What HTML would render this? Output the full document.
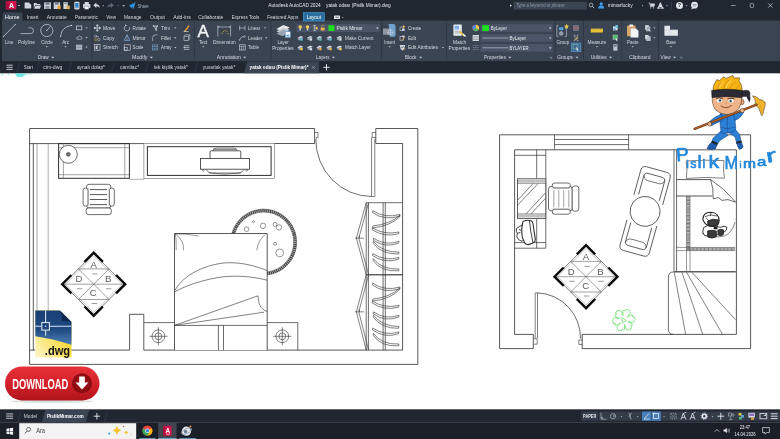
<!DOCTYPE html>
<html><head><meta charset="utf-8"><title>Autodesk AutoCAD 2024 - yatak odası (Pislik Mimar).dwg</title>
<style>
html,body{margin:0;padding:0;background:#fff;overflow:hidden}
body{width:780px;height:439px;font-family:"Liberation Sans",sans-serif}
svg{display:block;will-change:transform}
svg text{font-family:"Liberation Sans",sans-serif}
</style></head><body>
<svg width="780" height="439" viewBox="0 0 780 439">
<rect x="0" y="0" width="780" height="439" fill="#ffffff"/>
<rect x="0" y="0" width="780" height="73.3" fill="#212731"/>
<rect x="2" y="20.6" width="778" height="40.5" fill="#3b4453"/>
<path d="M2.7,21 L2.7,13.6 Q2.7,12.6 3.7,12.6 L21.6,12.6 Q22.6,12.6 22.6,13.6 L22.6,21 Z" fill="#3b4453"/>
<rect x="303.3" y="12.7" width="21" height="8.3" fill="#2c6f9f" stroke="#4aa3df" stroke-width="0.6"/>
<rect x="5.8" y="1" width="10.6" height="8.4" rx="0.8" fill="#d0144b"/>
<rect x="5.8" y="1" width="3" height="8.4" rx="0.8" fill="#a80f3c"/>
<text x="11.6" y="8" font-size="7" fill="#ffffff" text-anchor="middle" font-weight="bold" >A</text>
<path d="M17.9,5.05 L20.1,5.05 L19,6.369999999999999 Z" fill="#e8ebf0"/>
<path d="M24.6,2.6 h4.2 l2.4,2.2 v3.8 h-6.6 z" fill="#d0d5dd"/>
<path d="M33.8,3 h2.6 l0.8,1 h3 v1 h-5 l-1.4,3.6 z M35.6,5.6 h5.6 l-1.4,3.2 h-5.6 z" fill="#d0d5dd"/>
<path d="M44.1,2.4 h6.8 v6.6 h-6.8 z" fill="#d0d5dd"/><rect x="45.6" y="2.4" width="3.8" height="2.4" fill="#6d7685"/><rect x="45.4" y="6" width="4.2" height="3" fill="#8d95a3"/>
<path d="M53.7,2.4 h6.4 v6.6 h-6.4 z" fill="#d0d5dd"/><rect x="55" y="2.4" width="3.6" height="2.2" fill="#6d7685"/><rect x="57.6" y="5.6" width="3" height="3.6" fill="#e2a93b"/>
<path d="M63.4,2.2 h4.4 v6.8 h-4.4 z" fill="#d0d5dd"/><rect x="66.4" y="5.6" width="3.4" height="3.6" fill="#d8b25a"/><rect x="64.2" y="3.2" width="2.6" height="0.7" fill="#6d7685"/>
<rect x="74.3" y="1.8" width="5.2" height="7.6" rx="0.8" fill="#d0d5dd"/><rect x="75.3" y="3" width="3.2" height="4.6" fill="#2f7fc6"/>
<rect x="83" y="4" width="7.4" height="4" rx="0.8" fill="#d0d5dd"/><rect x="84.6" y="2" width="4.2" height="2.4" fill="#d0d5dd"/><rect x="84.6" y="6.6" width="4.2" height="2.6" fill="#f4f6f9" stroke="#6d7685" stroke-width="0.3"/>
<path d="M93.3,5.2 l3,-2.6 v1.7 q3.2,0 3.4,3.6 q-1,-1.8 -3.4,-1.7 v1.7 z" fill="#d0d5dd"/>
<path d="M102.3,5.35 L104.10000000000001,5.35 L103.2,6.43 Z" fill="#b9c0cb"/>
<path d="M113.8,5.2 l-3,-2.6 v1.7 q-3.2,0 -3.4,3.6 q1,-1.8 3.4,-1.7 v1.7 z" fill="#5d6675"/>
<path d="M117.1,5.35 L118.9,5.35 L118,6.43 Z" fill="#7b8493"/>
<path d="M122.4,5.1499999999999995 L125.0,5.1499999999999995 L123.7,6.71 Z" fill="#c9cfd9"/>
<path d="M129.2,5.6 l6.2,-3.2 l-2,6.4 l-1.4,-2.4 z M129.2,5.6 l2.6,0.8 l0.2,2.2" fill="#2f8fe0" stroke="#2f8fe0" stroke-width="0.3"/>
<text x="137.4" y="7.6" font-size="5.4" fill="#9fb3c9" textLength="11.3" lengthAdjust="spacingAndGlyphs" >Share</text>
<text x="268.3" y="7.4" font-size="5.2" fill="#e4e7ec" textLength="52.4" lengthAdjust="spacingAndGlyphs" >Autodesk AutoCAD 2024</text>
<text x="326" y="7.4" font-size="5.2" fill="#e4e7ec" textLength="64.7" lengthAdjust="spacingAndGlyphs" >yatak odası (Pislik Mimar).dwg</text>
<path d="M509.8,5.1 L511.8,5.1 L510.8,6.3 Z" fill="#c9cfd9"/>
<path d="M510,4.2 l1.8,1.4 l-1.8,1.4 z" fill="#c9cfd9"/>
<rect x="513.6" y="1.8" width="73.3" height="7.9" fill="#3b4453"/>
<text x="516.2" y="7.3" font-size="4.6" fill="#8e98a7" textLength="48.4" lengthAdjust="spacingAndGlyphs" font-style="italic" >Type a keyword or phrase</text>
<circle cx="591" cy="5" r="1.9" fill="none" stroke="#c9cfd9" stroke-width="0.7"/><path d="M592.4,6.4 l1.8,1.8" stroke="#c9cfd9" stroke-width="0.8"/>
<circle cx="601.2" cy="3.9" r="1.6" fill="#3f9be6"/><path d="M598.2,8.6 q0,-3 3,-3 q3,0 3,3 z" fill="#3f9be6"/>
<text x="607.7" y="7.4" font-size="5" fill="#e4e7ec" textLength="25.1" lengthAdjust="spacingAndGlyphs" >mimarlucky</text>
<path d="M641.6,5.35 L643.4,5.35 L642.5,6.43 Z" fill="#b9c0cb"/>
<path d="M648.6,3 h1.2 l0.6,3.4 h3.6 l0.6,-2.6 h-4.4" fill="none" stroke="#d5dae2" stroke-width="0.7"/><circle cx="650.8" cy="7.8" r="0.6" fill="#d5dae2"/><circle cx="653.6" cy="7.8" r="0.6" fill="#d5dae2"/><rect x="650.4" y="4" width="3.8" height="2.2" fill="#d5dae2"/>
<path d="M657.4,8.4 l2.6,-6 h0.8 l2.6,6 h-1.3 l-0.6,-1.5 h-2.2 l-0.6,1.5 z" fill="#d5dae2"/><rect x="657" y="7.6" width="7" height="0.9" fill="#d5dae2"/>
<path d="M666.1,5.35 L667.9,5.35 L667,6.43 Z" fill="#b9c0cb"/>
<rect x="671.4" y="2" width="0.5" height="7" fill="#4a5363"/>
<circle cx="679.5" cy="5.4" r="3.5" fill="#e4e7ec"/>
<text x="679.5" y="7.4" font-size="5.4" fill="#212731" text-anchor="middle" font-weight="bold" >?</text>
<path d="M685.7,5.35 L687.5,5.35 L686.6,6.43 Z" fill="#b9c0cb"/>
<circle cx="694.5" cy="5.2" r="3.4" fill="#e4e7ec"/><path d="M692,7.4 l-0.8,2 l2.4,-1.2 z" fill="#e4e7ec"/><rect x="692.6" y="4" width="3.8" height="0.6" fill="#6a7382"/><rect x="692.6" y="5.6" width="3.8" height="0.6" fill="#6a7382"/>
<rect x="731" y="5.3" width="4.6" height="0.7" fill="#b4bbc6"/>
<rect x="750.2" y="3.6" width="3.4" height="3.8" rx="0.8" fill="none" stroke="#b4bbc6" stroke-width="0.7"/>
<path d="M768.2,3.4 l4.2,4.2 M772.4,3.4 l-4.2,4.2" stroke="#c3c9d3" stroke-width="0.75"/>
<text x="5.1" y="18.8" font-size="5.2" fill="#ffffff" textLength="14.4" lengthAdjust="spacingAndGlyphs" >Home</text>
<text x="27" y="18.8" font-size="5.2" fill="#d5dae2" textLength="11.6" lengthAdjust="spacingAndGlyphs" >Insert</text>
<text x="46.8" y="18.8" font-size="5.2" fill="#d5dae2" textLength="19.9" lengthAdjust="spacingAndGlyphs" >Annotate</text>
<text x="74.9" y="18.8" font-size="5.2" fill="#d5dae2" textLength="23.1" lengthAdjust="spacingAndGlyphs" >Parametric</text>
<text x="106.3" y="18.8" font-size="5.2" fill="#d5dae2" textLength="9.6" lengthAdjust="spacingAndGlyphs" >View</text>
<text x="124.1" y="18.8" font-size="5.2" fill="#d5dae2" textLength="17.4" lengthAdjust="spacingAndGlyphs" >Manage</text>
<text x="150" y="18.8" font-size="5.2" fill="#d5dae2" textLength="15" lengthAdjust="spacingAndGlyphs" >Output</text>
<text x="173.3" y="18.8" font-size="5.2" fill="#d5dae2" textLength="17.4" lengthAdjust="spacingAndGlyphs" >Add-ins</text>
<text x="198.3" y="18.8" font-size="5.2" fill="#d5dae2" textLength="25.0" lengthAdjust="spacingAndGlyphs" >Collaborate</text>
<text x="231.7" y="18.8" font-size="5.2" fill="#d5dae2" textLength="27.6" lengthAdjust="spacingAndGlyphs" >Express Tools</text>
<text x="267.3" y="18.8" font-size="5.2" fill="#d5dae2" textLength="31.0" lengthAdjust="spacingAndGlyphs" >Featured Apps</text>
<text x="306.7" y="18.8" font-size="5.2" fill="#ffffff" textLength="14.3" lengthAdjust="spacingAndGlyphs" >Layout</text>
<rect x="334" y="15.4" width="6" height="3.6" rx="0.6" fill="#e4e7ec"/><rect x="335.4" y="16.8" width="3.2" height="0.8" fill="#3b4453"/>
<path d="M341.8,16.95 L343.59999999999997,16.95 L342.7,18.029999999999998 Z" fill="#c9cfd9"/>
<rect x="91.7" y="21.5" width="0.6" height="38.5" fill="#2a313d"/>
<rect x="194" y="21.5" width="0.6" height="38.5" fill="#2a313d"/>
<rect x="270.7" y="21.5" width="0.6" height="38.5" fill="#2a313d"/>
<rect x="381" y="21.5" width="0.6" height="38.5" fill="#2a313d"/>
<rect x="446.4" y="21.5" width="0.6" height="38.5" fill="#2a313d"/>
<rect x="554.8" y="21.5" width="0.6" height="38.5" fill="#2a313d"/>
<rect x="583" y="21.5" width="0.6" height="38.5" fill="#2a313d"/>
<rect x="621.5" y="21.5" width="0.6" height="38.5" fill="#2a313d"/>
<rect x="658" y="21.5" width="0.6" height="38.5" fill="#2a313d"/>
<path d="M3.4,36.6 L15.2,24.6" stroke="#cfd4dc" stroke-width="0.7"/><circle cx="3.4" cy="36.6" r="0.6" fill="#cfd4dc"/><circle cx="15.2" cy="24.6" r="0.6" fill="#cfd4dc"/>
<path d="M20.5,33.6 H30.6 A2.9,2.9 0 0 0 30.6,27.8 H28.6" fill="none" stroke="#cfd4dc" stroke-width="0.7"/>
<circle cx="46.8" cy="30.5" r="6.1" fill="none" stroke="#cfd4dc" stroke-width="0.7"/><path d="M46.8,30.5 L50.6,26.4" stroke="#cfd4dc" stroke-width="0.7"/><circle cx="46.8" cy="30.5" r="0.6" fill="#cfd4dc"/>
<path d="M60.6,36.2 Q61.4,27 71.6,25.4" fill="none" stroke="#cfd4dc" stroke-width="0.7"/><circle cx="60.6" cy="36.4" r="0.6" fill="#cfd4dc"/><circle cx="71.6" cy="25.4" r="0.6" fill="#cfd4dc"/>
<rect x="76.6" y="26" width="5.2" height="3.8" fill="none" stroke="#cfd4dc" stroke-width="0.7"/>
<path d="M77,39.2 q-1,-2.2 1.2,-2.4 q1,-1.6 2.6,-0.2 q1.8,0.2 1,2.6 z" fill="none" stroke="#cfd4dc" stroke-width="0.6"/>
<rect x="76.6" y="45" width="5.2" height="4.6" fill="#8d95a3" stroke="#cfd4dc" stroke-width="0.5"/><path d="M75.8,46.2 h6.8 M75.8,48.4 h6.8" stroke="#cfd4dc" stroke-width="0.5"/>
<path d="M85.35,27.425 L87.65,27.425 L86.5,28.805 Z" fill="#c5cbd5"/>
<path d="M85.35,37.025 L87.65,37.025 L86.5,38.405 Z" fill="#c5cbd5"/>
<path d="M85.35,46.724999999999994 L87.65,46.724999999999994 L86.5,48.105 Z" fill="#c5cbd5"/>
<text x="5.1" y="43.8" font-size="5" fill="#d5dae2" textLength="8.4" lengthAdjust="spacingAndGlyphs" >Line</text>
<text x="18" y="43.8" font-size="5" fill="#d5dae2" textLength="16.9" lengthAdjust="spacingAndGlyphs" >Polyline</text>
<text x="41.3" y="43.8" font-size="5" fill="#d5dae2" textLength="11.5" lengthAdjust="spacingAndGlyphs" >Circle</text>
<text x="62.2" y="43.8" font-size="5" fill="#d5dae2" textLength="7" lengthAdjust="spacingAndGlyphs" >Arc</text>
<path d="M45.699999999999996,46.150000000000006 L47.9,46.150000000000006 L46.8,47.470000000000006 Z" fill="#c5cbd5"/>
<path d="M64.5,46.150000000000006 L66.69999999999999,46.150000000000006 L65.6,47.470000000000006 Z" fill="#c5cbd5"/>
<text x="37.8" y="59" font-size="5" fill="#d5dae2" textLength="10.9" lengthAdjust="spacingAndGlyphs" >Draw</text>
<path d="M51.3,56.65 L54.3,56.65 L52.8,58.449999999999996 Z" fill="#c5cbd5"/>
<path d="M97.3,25 v6 M94.3,28 h6 M97.3,24.6 l-1,1.2 h2 z M97.3,31.4 l-1,-1.2 h2 z M93.9,28 l1.2,-1 v2 z M100.7,28 l-1.2,-1 v2 z" stroke="#cfd4dc" stroke-width="0.7" fill="#cfd4dc"/>
<circle cx="95.6" cy="36.4" r="1.2" fill="none" stroke="#cfd4dc" stroke-width="0.5"/><circle cx="98.8" cy="39.6" r="1.2" fill="none" stroke="#cfd4dc" stroke-width="0.5"/><circle cx="95.8" cy="39.8" r="1" fill="none" stroke="#e0a53a" stroke-width="0.5"/><path d="M96,36 l3,1" stroke="#cfd4dc" stroke-width="0.5"/>
<rect x="94.6" y="44.6" width="5.4" height="5.6" fill="none" stroke="#cfd4dc" stroke-width="0.6"/><path d="M97.6,44.6 v5.6" stroke="#cfd4dc" stroke-width="0.5"/><rect x="95.6" y="45.8" width="1.4" height="3.2" fill="#cfd4dc"/>
<text x="103" y="29.8" font-size="5" fill="#d5dae2" textLength="12.4" lengthAdjust="spacingAndGlyphs" >Move</text>
<text x="103" y="39.6" font-size="5" fill="#d5dae2" textLength="11.5" lengthAdjust="spacingAndGlyphs" >Copy</text>
<text x="103" y="49.3" font-size="5" fill="#d5dae2" textLength="15" lengthAdjust="spacingAndGlyphs" >Stretch</text>
<path d="M129.6,27.2 A2.8,2.8 0 1 1 125.8,25.6" fill="none" stroke="#cfd4dc" stroke-width="0.7"/><path d="M125,24.4 l2,0.8 l-1.6,1.4 z" fill="#cfd4dc"/>
<path d="M124.2,40.4 l2.8,-5.6 l2.8,5.6 z" fill="none" stroke="#7fb2e6" stroke-width="0.7"/><path d="M127,34.6 v6" stroke="#cfd4dc" stroke-width="0.4"/>
<rect x="124.2" y="44.8" width="6" height="5.4" fill="none" stroke="#cfd4dc" stroke-width="0.6"/><rect x="124.2" y="47.4" width="3" height="2.8" fill="none" stroke="#cfd4dc" stroke-width="0.6"/>
<text x="132.6" y="29.8" font-size="5" fill="#d5dae2" textLength="13.5" lengthAdjust="spacingAndGlyphs" >Rotate</text>
<text x="132.6" y="39.6" font-size="5" fill="#d5dae2" textLength="13.2" lengthAdjust="spacingAndGlyphs" >Mirror</text>
<text x="132.6" y="49.3" font-size="5" fill="#d5dae2" textLength="10.7" lengthAdjust="spacingAndGlyphs" >Scale</text>
<path d="M153.2,25 l3.6,5.6 M157.4,25 l-1.6,5.8 M152.8,26.2 h5.2" stroke="#cfd4dc" stroke-width="0.8" fill="none"/>
<path d="M152.6,41 V37.6 Q152.6,34.8 155.8,34.8 H157.6" fill="none" stroke="#cfd4dc" stroke-width="0.6"/>
<rect x="152.6" y="44.8" width="2" height="2" fill="none" stroke="#7fb2e6" stroke-width="0.5"/><rect x="155.8" y="44.8" width="2" height="2" fill="none" stroke="#7fb2e6" stroke-width="0.5"/><rect x="152.6" y="48" width="2" height="2" fill="none" stroke="#7fb2e6" stroke-width="0.5"/><rect x="155.8" y="48" width="2" height="2" fill="none" stroke="#7fb2e6" stroke-width="0.5"/>
<text x="161" y="29.8" font-size="5" fill="#d5dae2" textLength="9" lengthAdjust="spacingAndGlyphs" >Trim</text>
<text x="161" y="39.6" font-size="5" fill="#d5dae2" textLength="9.8" lengthAdjust="spacingAndGlyphs" >Fillet</text>
<text x="161" y="49.3" font-size="5" fill="#d5dae2" textLength="10.5" lengthAdjust="spacingAndGlyphs" >Array</text>
<path d="M174.15,27.425 L176.45000000000002,27.425 L175.3,28.805 Z" fill="#c5cbd5"/>
<path d="M174.15,37.324999999999996 L176.45000000000002,37.324999999999996 L175.3,38.705 Z" fill="#c5cbd5"/>
<path d="M174.15,46.925 L176.45000000000002,46.925 L175.3,48.305 Z" fill="#c5cbd5"/>
<path d="M184.4,30.8 l4,-5.6 l1.2,0.8 l-4,5.6 z" fill="#e9a23b"/><path d="M184,31.4 l0.4,-0.8 l1.2,0.8 z" fill="#f2d9b0"/><rect x="183.6" y="31.2" width="5" height="0.6" fill="#e8e0d0"/>
<rect x="184" y="36.2" width="4.6" height="4.2" fill="none" stroke="#cfd4dc" stroke-width="0.6"/><path d="M184,36.2 l1.2,-1.4 h4.6 l-1.2,1.4 M189.8,34.8 v4.2 l-1.2,1.4" fill="none" stroke="#cfd4dc" stroke-width="0.5"/>
<path d="M183.8,45.8 h5.6 M183.8,47.6 h5.6 M183.8,49.4 h5.6" stroke="#cfd4dc" stroke-width="0.7"/><path d="M183.4,47.6 l1.4,-1 v2 z" fill="#cfd4dc"/>
<text x="132" y="59" font-size="5" fill="#d5dae2" textLength="15.5" lengthAdjust="spacingAndGlyphs" >Modify</text>
<path d="M149.9,56.65 L152.9,56.65 L151.4,58.449999999999996 Z" fill="#c5cbd5"/>
<text x="203.2" y="36.9" font-size="17" fill="#eef0f4" text-anchor="middle" stroke="#eef0f4" stroke-width="0.45">A</text>
<text x="199.2" y="43.8" font-size="5" fill="#d5dae2" textLength="8" lengthAdjust="spacingAndGlyphs" >Text</text>
<path d="M202.20000000000002,46.150000000000006 L204.4,46.150000000000006 L203.3,47.470000000000006 Z" fill="#c5cbd5"/>
<path d="M217.8,25.4 v11 M230.6,25.4 v11 M217.8,27 h12.8" stroke="#cfd4dc" stroke-width="0.6" fill="none"/><path d="M217.8,27 l1.4,-0.7 v1.4 z M230.6,27 l-1.4,-0.7 v1.4 z" fill="#cfd4dc"/>
<path d="M221.4,33.6 l1.4,-0.8 M223.2,32 l0.8,-1.2 M225.2,31.2 v-1.2 M226.6,32 l0.8,-0.8 M227.4,33.4 l1.2,0.4" stroke="#e8c33a" stroke-width="0.7"/>
<text x="213" y="43.8" font-size="5" fill="#d5dae2" textLength="22.8" lengthAdjust="spacingAndGlyphs" >Dimension</text>
<path d="M239.6,25.8 v4.6 M245,25.8 v4.6 M239.6,28 h5.4" stroke="#cfd4dc" stroke-width="0.6"/>
<path d="M239.4,40.2 l2.4,-3.4 h2" stroke="#cfd4dc" stroke-width="0.6" fill="none"/><circle cx="244.6" cy="36.6" r="0.9" fill="none" stroke="#cfd4dc" stroke-width="0.5"/><path d="M239,40.8 l0.4,-1.6 l1,0.8 z" fill="#cfd4dc"/>
<rect x="239.4" y="44.8" width="5.8" height="5.2" fill="none" stroke="#cfd4dc" stroke-width="0.6"/><path d="M239.4,46.4 h5.8 M241.4,46.4 v3.6 M243.3,46.4 v3.6" stroke="#cfd4dc" stroke-width="0.5"/>
<text x="248.1" y="29.8" font-size="5" fill="#d5dae2" textLength="12" lengthAdjust="spacingAndGlyphs" >Linear</text>
<text x="248.1" y="39.6" font-size="5" fill="#d5dae2" textLength="14.1" lengthAdjust="spacingAndGlyphs" >Leader</text>
<text x="248.1" y="49.3" font-size="5" fill="#d5dae2" textLength="10.9" lengthAdjust="spacingAndGlyphs" >Table</text>
<path d="M263.85,27.425 L266.15,27.425 L265,28.805 Z" fill="#c5cbd5"/>
<path d="M265.05,37.324999999999996 L267.34999999999997,37.324999999999996 L266.2,38.705 Z" fill="#c5cbd5"/>
<text x="216.8" y="59" font-size="5" fill="#d5dae2" textLength="24" lengthAdjust="spacingAndGlyphs" >Annotation</text>
<path d="M243.2,56.65 L246.2,56.65 L244.7,58.449999999999996 Z" fill="#c5cbd5"/>
<path d="M276.4,29 l7,-4 l6.4,2.4 l-7,4 z" fill="#e8ebf0"/><path d="M276.4,31.4 l7,-4 l6.4,2.4 l-7,4 z" fill="#c4cad4"/><path d="M276.4,33.8 l7,-4 l6.4,2.4 l-7,4 z" fill="#9aa3b1"/><rect x="285.4" y="31.6" width="5" height="5.8" fill="#f4f6f9" stroke="#58a0dc" stroke-width="0.5"/><rect x="286.4" y="34.8" width="3" height="1.6" fill="#58a0dc"/>
<text x="277.4" y="43.8" font-size="5" fill="#d5dae2" textLength="11.3" lengthAdjust="spacingAndGlyphs" >Layer</text>
<text x="272.2" y="49.7" font-size="5" fill="#d5dae2" textLength="21.5" lengthAdjust="spacingAndGlyphs" >Properties</text>
<rect x="296.3" y="24.2" width="83.3" height="7.8" fill="#4b5567"/>
<circle cx="300.2" cy="27" r="1.7" fill="#f2cf4a"/><rect x="299.5" y="28.6" width="1.4" height="1.8" fill="#d8dce3"/>
<circle cx="307.5" cy="27" r="1.7" fill="#f2cf4a"/><rect x="306.8" y="28.6" width="1.4" height="1.8" fill="#d8dce3"/>
<path d="M313.2,25.6 h3 M313.2,28 h3 M313.2,30.4 h3 M314.7,25.4 v5.2" stroke="#d8dce3" stroke-width="0.6"/><rect x="316" y="27" width="1.6" height="2.4" fill="#f2cf4a"/>
<rect x="320.8" y="27.6" width="3.8" height="3" fill="#e9b44a"/><path d="M321.6,27.6 v-1 a1.2,1.2 0 0 1 2.4,-0.6" fill="none" stroke="#e9b44a" stroke-width="0.6"/>
<rect x="328.4" y="25.2" width="6" height="5.8" fill="#1fe01f"/>
<text x="336.5" y="30" font-size="5" fill="#e8ebf0" textLength="26.1" lengthAdjust="spacingAndGlyphs" >Pislik Mimar</text>
<path d="M376.0,27.5 L378.79999999999995,27.5 L377.4,29.18 Z" fill="#c5cbd5"/>
<path d="M297.4,37.9 l3.2,-2 l2.6,1.2 l-3.2,2 z" fill="#d8dce3"/><path d="M297.4,39.3 l3.2,-2 l2.6,1.2 l-3.2,2 z" fill="#9aa3b1"/>
<rect x="300.4" y="38.5" width="2.2" height="2.2" fill="#58c0d8"/>
<path d="M306.9,37.9 l3.2,-2 l2.6,1.2 l-3.2,2 z" fill="#d8dce3"/><path d="M306.9,39.3 l3.2,-2 l2.6,1.2 l-3.2,2 z" fill="#9aa3b1"/>
<rect x="309.9" y="38.5" width="2.2" height="2.2" fill="#d8dce3"/>
<path d="M316.4,37.9 l3.2,-2 l2.6,1.2 l-3.2,2 z" fill="#d8dce3"/><path d="M316.4,39.3 l3.2,-2 l2.6,1.2 l-3.2,2 z" fill="#9aa3b1"/>
<rect x="319.4" y="38.5" width="2.2" height="2.2" fill="#58c0a8"/>
<path d="M326.4,37.9 l3.2,-2 l2.6,1.2 l-3.2,2 z" fill="#d8dce3"/><path d="M326.4,39.3 l3.2,-2 l2.6,1.2 l-3.2,2 z" fill="#9aa3b1"/>
<rect x="329.4" y="38.5" width="2.2" height="2.2" fill="#58c0d8"/>
<path d="M336.4,37.9 l3.2,-2 l2.6,1.2 l-3.2,2 z" fill="#d8dce3"/><path d="M336.4,39.3 l3.2,-2 l2.6,1.2 l-3.2,2 z" fill="#9aa3b1"/>
<rect x="339.4" y="38.5" width="2.2" height="2.2" fill="#d8dce3"/>
<path d="M297.4,47.5 l3.2,-2 l2.6,1.2 l-3.2,2 z" fill="#d8dce3"/><path d="M297.4,48.9 l3.2,-2 l2.6,1.2 l-3.2,2 z" fill="#9aa3b1"/>
<rect x="300.4" y="48.1" width="2.2" height="2.2" fill="#f2cf4a"/>
<path d="M306.9,47.5 l3.2,-2 l2.6,1.2 l-3.2,2 z" fill="#d8dce3"/><path d="M306.9,48.9 l3.2,-2 l2.6,1.2 l-3.2,2 z" fill="#9aa3b1"/>
<rect x="309.9" y="48.1" width="2.2" height="2.2" fill="#d8dce3"/>
<path d="M316.4,47.5 l3.2,-2 l2.6,1.2 l-3.2,2 z" fill="#d8dce3"/><path d="M316.4,48.9 l3.2,-2 l2.6,1.2 l-3.2,2 z" fill="#9aa3b1"/>
<rect x="319.4" y="48.1" width="2.2" height="2.2" fill="#e9a23b"/>
<path d="M326.4,47.5 l3.2,-2 l2.6,1.2 l-3.2,2 z" fill="#d8dce3"/><path d="M326.4,48.9 l3.2,-2 l2.6,1.2 l-3.2,2 z" fill="#9aa3b1"/>
<rect x="329.4" y="48.1" width="2.2" height="2.2" fill="#e9b44a"/>
<path d="M336.4,47.5 l3.2,-2 l2.6,1.2 l-3.2,2 z" fill="#d8dce3"/><path d="M336.4,48.9 l3.2,-2 l2.6,1.2 l-3.2,2 z" fill="#9aa3b1"/>
<rect x="339.4" y="48.1" width="2.2" height="2.2" fill="#f2cf4a"/>
<text x="345" y="39.6" font-size="5" fill="#d5dae2" textLength="28.5" lengthAdjust="spacingAndGlyphs" >Make Current</text>
<text x="345" y="49.3" font-size="5" fill="#d5dae2" textLength="25.7" lengthAdjust="spacingAndGlyphs" >Match Layer</text>
<text x="316.1" y="59" font-size="5" fill="#d5dae2" textLength="13.4" lengthAdjust="spacingAndGlyphs" >Layers</text>
<path d="M331.9,56.65 L334.9,56.65 L333.4,58.449999999999996 Z" fill="#c5cbd5"/>
<rect x="383" y="28.4" width="8.4" height="6.4" rx="0.6" fill="#8d95a3"/><path d="M388.6,24 h4.4 q2.6,0 2.6,2.6 v7.6 q0,2.6 -2.6,2.6 h-3 z" fill="#7fb8e8" opacity="0.8"/><circle cx="390.4" cy="32.4" r="2.6" fill="none" stroke="#d8dce3" stroke-width="0.5"/><path d="M390.4,29.2 v6.4 M387.2,32.4 h6.4" stroke="#d8dce3" stroke-width="0.4"/>
<text x="384.2" y="43.8" font-size="5" fill="#d5dae2" textLength="10.9" lengthAdjust="spacingAndGlyphs" >Insert</text>
<path d="M388.59999999999997,46.150000000000006 L390.8,46.150000000000006 L389.7,47.470000000000006 Z" fill="#c5cbd5"/>
<rect x="400" y="27" width="3.6" height="3.6" fill="none" stroke="#cfd4dc" stroke-width="0.6"/><path d="M403.8,25 l0.5,1 l1,0.1 l-0.8,0.7 l0.3,1 l-1,-0.6 l-1,0.6 l0.3,-1 l-0.8,-0.7 l1,-0.1 z" fill="#f2cf4a"/><rect x="402" y="28.6" width="2.6" height="2.4" fill="#cfd4dc"/>
<rect x="400" y="36.6" width="3.6" height="3.6" fill="none" stroke="#cfd4dc" stroke-width="0.6"/><path d="M402,40.4 l3,-3.4" stroke="#e9a23b" stroke-width="0.9"/><rect x="402" y="35.6" width="2.6" height="1.6" fill="#cfd4dc"/>
<path d="M399.6,45 h5.6 l-1,4 l-1.8,1.6 l-1.8,-1.6 z" fill="#cfd4dc"/><path d="M401.2,47 l1,1 l1.6,-2" stroke="#3b4453" stroke-width="0.6" fill="none"/><path d="M403,50.6 l2.4,-2.6" stroke="#e9a23b" stroke-width="0.8"/>
<text x="408" y="29.8" font-size="5" fill="#d5dae2" textLength="13.3" lengthAdjust="spacingAndGlyphs" >Create</text>
<text x="408" y="39.6" font-size="5" fill="#d5dae2" textLength="8" lengthAdjust="spacingAndGlyphs" >Edit</text>
<text x="408" y="49.3" font-size="5" fill="#d5dae2" textLength="30" lengthAdjust="spacingAndGlyphs" >Edit Attributes</text>
<path d="M441.75,46.925 L444.04999999999995,46.925 L442.9,48.305 Z" fill="#c5cbd5"/>
<text x="404.8" y="59" font-size="5" fill="#d5dae2" textLength="11.7" lengthAdjust="spacingAndGlyphs" >Block</text>
<path d="M419.2,56.65 L422.2,56.65 L420.7,58.449999999999996 Z" fill="#c5cbd5"/>
<rect x="453.4" y="24.4" width="8.4" height="11.4" rx="0.6" fill="#e8ebf0"/><rect x="454.6" y="25.8" width="4.4" height="3.6" fill="#7fb2e6"/><rect x="454.6" y="30.8" width="6" height="0.7" fill="#8d95a3"/><rect x="454.6" y="32.6" width="6" height="0.7" fill="#8d95a3"/><path d="M459.6,31.4 l4.6,4.4" stroke="#e8c33a" stroke-width="1.6"/><path d="M463,34 l2.6,2.6" stroke="#f4f6f9" stroke-width="1.4"/>
<text x="453" y="43.8" font-size="5" fill="#d5dae2" textLength="13.2" lengthAdjust="spacingAndGlyphs" >Match</text>
<text x="448.5" y="49.7" font-size="5" fill="#d5dae2" textLength="21.6" lengthAdjust="spacingAndGlyphs" >Properties</text>
<circle cx="475.8" cy="28" r="3.3" fill="#e8574a"/><path d="M475.8,28 L475.8,24.7 A3.3,3.3 0 0 1 478.66,29.65 Z" fill="#f2cf4a"/><path d="M475.8,28 L478.66,29.65 A3.3,3.3 0 0 1 472.94,29.65 Z" fill="#4ab86a"/><path d="M475.8,28 L472.94,29.65 A3.3,3.3 0 0 1 475.8,24.7 Z" fill="#4a8ae8"/>
<rect x="472.6" y="35" width="6.4" height="6" fill="#d8dce3"/><path d="M472.6,36.6 h6.4 M472.6,38 h6.4 M472.6,39.6 h6.4" stroke="#6d7685" stroke-width="0.5"/>
<path d="M472.8,45.6 h6 M472.8,47.6 h6 M472.8,49.6 h6" stroke="#9aa3b1" stroke-width="0.7" stroke-dasharray="1.2,0.6"/>
<rect x="480.5" y="24.2" width="71.9" height="7.7" fill="#4b5567"/>
<path d="M548.9,27.5 L551.6999999999999,27.5 L550.3,29.18 Z" fill="#c5cbd5"/>
<rect x="480.5" y="34.1" width="71.9" height="7.7" fill="#4b5567"/>
<path d="M548.9,37.4 L551.6999999999999,37.4 L550.3,39.08 Z" fill="#c5cbd5"/>
<rect x="480.5" y="44" width="71.9" height="7.7" fill="#4b5567"/>
<path d="M548.9,47.3 L551.6999999999999,47.3 L550.3,48.98 Z" fill="#c5cbd5"/>
<rect x="482.2" y="25.2" width="6.8" height="5.8" fill="#1fe01f"/>
<text x="490.7" y="30" font-size="5" fill="#e8ebf0" textLength="16.3" lengthAdjust="spacingAndGlyphs" >ByLayer</text>
<path d="M482.6,38 H508.4 M482.6,47.8 H508.4" stroke="#e8ebf0" stroke-width="0.5"/>
<text x="509.4" y="39.8" font-size="5" fill="#e8ebf0" textLength="16.6" lengthAdjust="spacingAndGlyphs" >ByLayer</text>
<text x="509.4" y="49.6" font-size="5" fill="#e8ebf0" textLength="19.1" lengthAdjust="spacingAndGlyphs" >BYLAYER</text>
<text x="484" y="59" font-size="5" fill="#d5dae2" textLength="21.9" lengthAdjust="spacingAndGlyphs" >Properties</text>
<path d="M508.3,56.65 L511.3,56.65 L509.8,58.449999999999996 Z" fill="#c5cbd5"/>
<path d="M549.6,57 h2 v2 M551.6,59 l-1.8,-1.8" stroke="#9aa3b1" stroke-width="0.4" fill="none"/>
<path d="M558.4,25.6 h-1.6 v10.8 h1.6 M564.8,28 h1.6 v8.4 h-1.6" fill="none" stroke="#cfd4dc" stroke-width="0.6"/><rect x="559" y="27.2" width="4.4" height="3" rx="0.6" fill="#58a0dc"/><circle cx="561.2" cy="33.4" r="1.9" fill="#8d95a3" stroke="#cfd4dc" stroke-width="0.4"/><path d="M566.6,23.8 l0.7,1.7 l1.8,0.2 l-1.4,1.2 l0.5,1.8 l-1.6,-1 l-1.6,1 l0.5,-1.8 l-1.4,-1.2 l1.8,-0.2 z" fill="#f2cf4a"/>
<text x="556.4" y="43.8" font-size="5" fill="#d5dae2" textLength="12.9" lengthAdjust="spacingAndGlyphs" >Group</text>
<path d="M574,25 v6 M576,25 v6 M578,25 v6" stroke="#d8dce3" stroke-width="0.6"/><path d="M573.4,26.6 l2,2.6 M578.6,26.6 l-2,2.6" stroke="#e8574a" stroke-width="0.8"/>
<path d="M573.6,35 h1.4 v5.6 h-1.4 M578.4,35 h-1.4 v5.6 h1.4" stroke="#d8dce3" stroke-width="0.5" fill="none"/><path d="M575.4,40 l2.6,-3" stroke="#e8c33a" stroke-width="1"/>
<rect x="571.2" y="43" width="9.6" height="8.7" fill="#3d6a94" stroke="#5aa0d8" stroke-width="0.6"/><rect x="573" y="44.6" width="5" height="4.4" fill="none" stroke="#9ad08a" stroke-width="0.5"/><path d="M576,46.6 l2.6,3.6 l-1.2,0 l-0.4,1 z" fill="#f4f6f9"/>
<text x="557.3" y="59" font-size="5" fill="#d5dae2" textLength="15.7" lengthAdjust="spacingAndGlyphs" >Groups</text>
<path d="M575.5,56.65 L578.5,56.65 L577,58.449999999999996 Z" fill="#c5cbd5"/>
<rect x="590.8" y="28.6" width="12.1" height="3.9" fill="#e8c33a"/><path d="M592.4,28.6 v1.6 M594.4,28.6 v1.2 M596.4,28.6 v1.6 M598.4,28.6 v1.2 M600.4,28.6 v1.6" stroke="#8a6d1a" stroke-width="0.4"/>
<text x="587.5" y="43.8" font-size="5" fill="#d5dae2" textLength="18.7" lengthAdjust="spacingAndGlyphs" >Measure</text>
<path d="M595.9,46.150000000000006 L598.1,46.150000000000006 L597,47.470000000000006 Z" fill="#c5cbd5"/>
<rect x="613" y="26.4" width="4.6" height="4" fill="#d8dce3"/><rect x="615.4" y="25" width="2.6" height="2.6" fill="#58c0d8"/><rect x="613.6" y="28.4" width="2" height="1.6" fill="#58a0dc"/>
<rect x="613" y="35" width="4.4" height="4.4" fill="#4ab86a" stroke="#d8dce3" stroke-width="0.4"/><path d="M615.4,37 l2.4,3.4 l-1.1,0 l-0.4,0.9 z" fill="#f4f6f9"/>
<rect x="613.4" y="44.4" width="4" height="6.2" fill="#d8dce3"/><rect x="614" y="45.2" width="2.8" height="1.4" fill="#58606e"/><path d="M614,47.6 h2.8 M614,48.8 h2.8 M614,50 h2.8" stroke="#58606e" stroke-width="0.4" stroke-dasharray="0.6,0.5"/>
<text x="590.8" y="59" font-size="5" fill="#d5dae2" textLength="15.9" lengthAdjust="spacingAndGlyphs" >Utilities</text>
<path d="M609.1,56.65 L612.1,56.65 L610.6,58.449999999999996 Z" fill="#c5cbd5"/>
<rect x="627" y="25.6" width="8.6" height="10.6" rx="0.8" fill="#d8a56a"/><rect x="629.4" y="24.4" width="3.8" height="2.2" rx="0.5" fill="#f4f6f9"/><path d="M630.6,28.4 h5.4 l2.4,2.4 v6.6 h-7.8 z" fill="#f4f6f9" stroke="#9aa3b1" stroke-width="0.3"/>
<text x="627" y="43.8" font-size="5" fill="#d5dae2" textLength="11.5" lengthAdjust="spacingAndGlyphs" >Paste</text>
<path d="M631.6,46.150000000000006 L633.8000000000001,46.150000000000006 L632.7,47.470000000000006 Z" fill="#c5cbd5"/>
<rect x="645.2" y="25.2" width="3.6" height="4.6" fill="#d8dce3"/><rect x="646.6" y="26.8" width="3.4" height="4.2" fill="#9aa3b1" stroke="#d8dce3" stroke-width="0.4"/><path d="M648.6,29 l1.8,2.6" stroke="#f4f6f9" stroke-width="0.6"/>
<rect x="645.2" y="35" width="3.4" height="4.4" fill="#d8dce3"/><rect x="646.8" y="36.4" width="3.4" height="4.4" fill="#b4bcc8" stroke="#d8dce3" stroke-width="0.4"/>
<path d="M653.3,27.45 L655.5,27.45 L654.4,28.77 Z" fill="#c5cbd5"/>
<path d="M653.3,37.25 L655.5,37.25 L654.4,38.57 Z" fill="#c5cbd5"/>
<text x="629.2" y="59" font-size="5" fill="#d5dae2" textLength="21.2" lengthAdjust="spacingAndGlyphs" >Clipboard</text>
<path d="M664.4,25.8 h5.6 v4 h7.9 v6 h-13.5 z" fill="#e4e7ec"/><path d="M664.4,29.8 h13.5 M670,29.8 v6" stroke="#aab2be" stroke-width="0.3" fill="none"/>
<text x="666.3" y="43.8" font-size="5" fill="#d5dae2" textLength="9.7" lengthAdjust="spacingAndGlyphs" >Base</text>
<path d="M669.9,46.150000000000006 L672.1,46.150000000000006 L671,47.470000000000006 Z" fill="#c5cbd5"/>
<text x="660.6" y="59" font-size="5" fill="#d5dae2" textLength="10.2" lengthAdjust="spacingAndGlyphs" >View</text>
<path d="M673.1,56.65 L676.1,56.65 L674.6,58.449999999999996 Z" fill="#c5cbd5"/>
<path d="M679.8,57 h2 v2 M681.8,59 l-1.8,-1.8" stroke="#9aa3b1" stroke-width="0.4" fill="none"/>
<path d="M243.8,73.3 L247.4,61.6 L318.9,61.6 L318.9,73.3 Z" fill="#3b4453"/>
<path d="M6.5,65.2 h6.2 M6.5,67.3 h6.2 M6.5,69.4 h6.2" stroke="#e4e7ec" stroke-width="0.8"/>
<text x="23.8" y="69" font-size="5" fill="#cfd4dc" textLength="9.2" lengthAdjust="spacingAndGlyphs" >Start</text>
<text x="43.2" y="69" font-size="5" fill="#cfd4dc" textLength="19.1" lengthAdjust="spacingAndGlyphs" >cim-dwg</text>
<text x="76.9" y="69" font-size="5" fill="#cfd4dc" textLength="28.1" lengthAdjust="spacingAndGlyphs" >aynalı dolap*</text>
<text x="120" y="69" font-size="5" fill="#cfd4dc" textLength="19.2" lengthAdjust="spacingAndGlyphs" >camilac*</text>
<text x="154" y="69" font-size="5" fill="#cfd4dc" textLength="34" lengthAdjust="spacingAndGlyphs" >tek kişilik yatak*</text>
<text x="202.8" y="69" font-size="5" fill="#cfd4dc" textLength="32.5" lengthAdjust="spacingAndGlyphs" >yuvarlak yatak*</text>
<path d="M17.1,72 l2.8,-9.4" stroke="#3a4250" stroke-width="0.6"/>
<path d="M36.6,72 l2.8,-9.4" stroke="#3a4250" stroke-width="0.6"/>
<path d="M68.6,72 l2.8,-9.4" stroke="#3a4250" stroke-width="0.6"/>
<path d="M111.6,72 l2.8,-9.4" stroke="#3a4250" stroke-width="0.6"/>
<path d="M145.6,72 l2.8,-9.4" stroke="#3a4250" stroke-width="0.6"/>
<path d="M194.6,72 l2.8,-9.4" stroke="#3a4250" stroke-width="0.6"/>
<text x="249.6" y="69" font-size="5" fill="#ffffff" textLength="58.9" lengthAdjust="spacingAndGlyphs" font-weight="bold" >yatak odası (Pislik Mimar)*</text>
<path d="M311.9,65.8 l3,3 M314.9,65.8 l-3,3" stroke="#aab2be" stroke-width="0.6"/>
<path d="M323.3,67.3 h6.4 M326.5,64.1 v6.4" stroke="#f4f6f9" stroke-width="0.9"/>
<g fill="#45e0e2"><ellipse cx="20" cy="75.2" rx="3.8" ry="1.9" opacity="0.75"/><ellipse cx="17" cy="74.2" rx="2" ry="0.9" opacity="0.6"/><ellipse cx="24.6" cy="74.4" rx="2.2" ry="1" opacity="0.55"/><circle cx="2" cy="74.6" r="0.9" opacity="0.6"/><circle cx="8.4" cy="74.6" r="0.9" opacity="0.5"/><circle cx="28.6" cy="74.2" r="0.8" opacity="0.5"/><circle cx="31.6" cy="74" r="0.6" opacity="0.4"/></g>
<g fill="none" stroke="#2e2e2e" stroke-width="0.8" stroke-linecap="butt" stroke-linejoin="miter">
<path d="M314.6,128.5 H29.6 V364.4 H417.8 V128.5 H375.8 V143.5 H402.6 V350.1 H143.8 V314.3 H129.6 V350.1 H29.6"/>
<path d="M314.6,128.5 V143.5 H274.6"/>
<path d="M29.6,143.6 H143.9"/>
<path d="M33.3,143.6 V350.1" stroke-width="0.8"/>
<path d="M37,143.6 V350.1" stroke="#808080" stroke-width="0.7"/>
<path d="M48.2,143.6 V350.1" stroke="#8c8c8c" stroke-width="0.7"/>
<path d="M314.6,132.5 h3.4 v5 h-1.6 v2" stroke-width="0.6"/>
<path d="M375.8,132.5 h-3.6 v5 h3.6 M371.5,137.5 V196.5 M374.8,139 V196.5 M371.5,196.5 h3.3" stroke-width="0.6"/>
<path d="M315.8,139.4 A56,57 0 0 0 371.5,196.5" stroke-width="0.7"/>
<rect x="58.6" y="143.6" width="70.8" height="34.7" stroke-width="1"/>
<path d="M63.4,143.6 V178.3 M124.8,143.6 V178.3 M58.6,147.7 H129.4 M58.6,174.7 H129.4" stroke="#666" stroke-width="0.6"/>
<circle cx="68.3" cy="154.3" r="9" fill="#fff" stroke-width="0.7"/><circle cx="68.3" cy="154.3" r="1.9" fill="#777" stroke-width="0.6"/>
<path d="M129.4,179.3 H143.9 V178.5" stroke="#777" stroke-width="0.6"/>
<rect x="143.9" y="143.4" width="130.7" height="35.1" stroke="#666" stroke-width="0.6"/>
<rect x="147.4" y="146.7" width="123.7" height="28.7" stroke-width="1"/>
<path d="M209,173 Q225,175.2 241,173" stroke-width="0.6"/><path d="M206,169.4 Q207,172.6 212,173 H238 Q243,172.6 244,169.4" stroke-width="0.6"/>
<rect x="200.4" y="158.4" width="49.2" height="10.8" fill="#fff" stroke-width="0.8"/>
<path d="M210,158.4 V152 Q210,150.8 211.2,150.8 H239.6 Q240.8,150.8 240.8,152 V158.4" stroke-width="0.8"/>
<path d="M213,150.8 Q213,148.1 216,148.1 H234 Q237,148.1 237,150.8 M213.6,149.4 H236.4" stroke-width="0.6"/>
<circle cx="203.2" cy="170.4" r="0.8" stroke-width="0.5"/><circle cx="246.8" cy="170.4" r="0.8" stroke-width="0.5"/>
<g transform="translate(98.7,199.5) rotate(0)" stroke-width="0.7">
<rect x="-12.2" y="-15.2" width="24.4" height="23.8" rx="2.6" fill="#fff"/>
<rect x="-15.6" y="-11.4" width="4.9" height="18" rx="2.2" fill="#fff"/>
<rect x="10.7" y="-11.4" width="4.9" height="18" rx="2.2" fill="#fff"/>
<rect x="-12.6" y="8.5" width="25.2" height="6.6" rx="2.4" fill="#fff"/>
<path d="M-8.8,-9.9 H8.4 M-8.8,-4.9 H8.4 M-8.8,0 H8.4 M-8.8,5.1 H8.4" stroke-width="0.8" stroke="#2e2e2e"/>
<path d="M-10.2,-12 V7 M10.2,-12 V7" stroke="#999" stroke-width="0.4"/>
</g>
<g transform="translate(93.7,284.2)">
<path d="M0,-30.6 L30.6,0 L0,30.6 L-30.6,0 Z" fill="#fff" stroke-width="0.6"/>
<path d="M0,-28.400000000000002 L28.400000000000002,0 L0,28.400000000000002 L-28.400000000000002,0 Z" stroke-width="0.4" stroke="#777"/>
<path d="M-30.6,0 H30.6 M-15.3,-15.3 L15.3,15.3 M15.3,-15.3 L-15.3,15.3 M-15.3,-15.3 H15.3 M-15.3,15.3 H15.3" stroke-width="0.5" stroke="#444"/>
<path d="M-9.2,-22.3 L0,-31.5 L9.2,-22.3" stroke="#0a0a0a" stroke-width="2.4" stroke-linejoin="miter"/>
<path d="M22.3,-9.2 L31.5,0 L22.3,9.2" stroke="#0a0a0a" stroke-width="2.4" stroke-linejoin="miter"/>
<path d="M-9.2,22.3 L0,31.5 L9.2,22.3" stroke="#0a0a0a" stroke-width="2.4" stroke-linejoin="miter"/>
<path d="M-22.3,-9.2 L-31.5,0 L-22.3,9.2" stroke="#0a0a0a" stroke-width="2.4" stroke-linejoin="miter"/>
<path d="M-1.6,-10.3 h5.4 M-16.8,4.6 h5.4 M12.3,4.6 h5.4 M-2,19.3 h5.4" stroke="#555" stroke-width="0.6"/>
</g>
<text x="93.7" y="267.8" font-size="9.6" fill="#5a5a5a" stroke="none" text-anchor="middle">A</text>
<text x="78.9" y="282.4" font-size="9.6" fill="#5a5a5a" stroke="none" text-anchor="middle">D</text>
<text x="108.10000000000001" y="282.4" font-size="9.6" fill="#5a5a5a" stroke="none" text-anchor="middle">B</text>
<text x="93.3" y="296.0" font-size="9.6" fill="#5a5a5a" stroke="none" text-anchor="middle">C</text>
<path d="M174.5,350.1 V233.5 H267.2 V350.1" fill="#fff"/>
<path d="M174.5,325.4 H267.2 M218.4,325.4 V350.1 M223.5,325.4 V350.1" stroke-width="0.7"/>
<path d="M174.8,290.6 C186,270 215,263 228.4,262.7 C243,262.6 256,266 267.2,270.7" stroke-width="0.6"/>
<path d="M174.8,291.8 C190,283 215,277 228.4,276.4 C243,275.6 256,277.4 267.2,280.2" stroke-width="0.6"/>
<path d="M174.5,325.4 L258,295.8 C258.6,304 260,309 267.2,311.5 M174.5,325.4 L264,312.2" stroke-width="0.6"/>
<path d="M174.8,233.8 Q186,233.6 198.6,236 M175.4,234 Q176.4,240 176.2,250 M175.6,234.2 Q184,240 183.6,250.4 M265.4,234.4 Q258,240 256.8,250.4" stroke-width="0.5"/>
<path d="M143.8,322.6 H174.5 M267.2,322.6 H297.8 V350.1" stroke-width="0.7"/>
<circle cx="158.4" cy="336.3" r="6.4" stroke-width="0.6"/><circle cx="158.4" cy="336.3" r="3.4" stroke-width="0.6"/><path d="M149.4,336.3 h18 M158.4,327.3 v18" stroke-width="0.6"/>
<circle cx="282.3" cy="336.3" r="6.4" stroke-width="0.6"/><circle cx="282.3" cy="336.3" r="3.4" stroke-width="0.6"/><path d="M273.3,336.3 h18 M282.3,327.3 v18" stroke-width="0.6"/>
<path d="M233.4,233.5 A31.5,31.5 0 1 1 267.1,273.4" stroke="#484848" stroke-width="3" stroke-dasharray="1.5,0.45"/>
<path d="M231.8,233.5 A33,33 0 1 1 267.1,274.9" stroke="#444" stroke-width="0.5"/>
<path d="M234.9,233.5 A30,30 0 1 1 267.1,271.9" stroke="#444" stroke-width="0.5"/>
<circle cx="246.6" cy="229.2" r="2.3" stroke-width="0.5"/>
<circle cx="253.5" cy="221.7" r="1" stroke-width="0.5"/>
<circle cx="263" cy="225.8" r="2.7" stroke-width="0.5"/>
<circle cx="275.1" cy="224.4" r="2" stroke-width="0.5"/>
<circle cx="279" cy="227.4" r="2.7" stroke-width="0.5"/>
<circle cx="275.1" cy="243.8" r="1.5" stroke-width="0.5"/>
<circle cx="279.7" cy="252.9" r="3.9" stroke-width="0.5"/>
<path d="M366.2,202.7 H402.6 M366.2,202.7 V274.8 M368.4,202.7 V274.8 M383.1,202.7 V274.8 M385.3,202.7 V274.8" stroke-width="0.7"/>
<path d="M366.2,202.7 L356.4,238.15 L366.2,274.8 M368.4,203.29999999999998 L358.8,238.15 L368.4,274.2" stroke-width="0.6"/>
<path d="M355,238.15 h9 M359.4,235.55 v2.6" stroke-width="0.6"/>
<path d="M372.8,210.7 Q385,218.7 400,214.4 L399.6,216.2 Q384.4,220.9 372.6,212.6 Z" stroke="#3c3c3c" stroke-width="0.65"/>
<path d="M372.8,226.0 Q390,224.2 400,215.2 L399.6,217.0 Q389.4,226.4 372.6,227.9 Z" stroke="#3c3c3c" stroke-width="0.65"/>
<path d="M372.4,227.9 Q384.6,235.3 399,232.0 L398.6,233.8 Q384.0,237.5 372.2,229.8 Z" stroke="#3c3c3c" stroke-width="0.65"/>
<path d="M373.4,238.2 Q385.5,246.2 399,241.4 L398.6,243.2 Q384.9,248.4 373.2,240.1 Z" stroke="#3c3c3c" stroke-width="0.65"/>
<path d="M373.4,241.4 Q382,252.2 399,252.2 L398.6,254.0 Q381.4,254.4 373.2,243.3 Z" stroke="#3c3c3c" stroke-width="0.65"/>
<path d="M372.8,253.7 Q385.5,261.7 399,257.4 L398.6,259.2 Q384.9,263.9 372.6,255.6 Z" stroke="#3c3c3c" stroke-width="0.65"/>
<path d="M373.4,258.7 Q381.5,269.7 399,269.0 L398.6,270.8 Q380.9,271.9 373.2,260.6 Z" stroke="#3c3c3c" stroke-width="0.65"/>
<path d="M366.2,274.8 H402.6 M366.2,274.8 V350.1 M368.4,274.8 V350.1 M383.1,274.8 V350.1 M385.3,274.8 V350.1" stroke-width="0.7"/>
<path d="M366.2,274.8 L356.4,311.85 L366.2,350.1 M368.4,275.40000000000003 L358.8,311.85 L368.4,349.5" stroke-width="0.6"/>
<path d="M355,311.85 h9 M359.4,309.25 v2.6" stroke-width="0.6"/>
<path d="M372.8,283.2 Q385,291.5 400,287.0 L399.6,288.8 Q384.4,293.7 372.6,285.1 Z" stroke="#3c3c3c" stroke-width="0.65"/>
<path d="M372.8,299.1 Q390,297.3 400,287.9 L399.6,289.7 Q389.4,299.5 372.6,301.0 Z" stroke="#3c3c3c" stroke-width="0.65"/>
<path d="M372.4,301.1 Q384.6,308.8 399,305.4 L398.6,307.2 Q384.0,311.0 372.2,303.0 Z" stroke="#3c3c3c" stroke-width="0.65"/>
<path d="M373.4,311.9 Q385.5,320.2 399,315.2 L398.6,317.0 Q384.9,322.4 373.2,313.8 Z" stroke="#3c3c3c" stroke-width="0.65"/>
<path d="M373.4,315.2 Q382,326.5 399,326.5 L398.6,328.3 Q381.4,328.7 373.2,317.1 Z" stroke="#3c3c3c" stroke-width="0.65"/>
<path d="M372.8,328.1 Q385.5,336.4 399,331.9 L398.6,333.7 Q384.9,338.6 372.6,330.0 Z" stroke="#3c3c3c" stroke-width="0.65"/>
<path d="M373.4,333.3 Q381.5,344.8 399,344.0 L398.6,345.8 Q380.9,347.0 373.2,335.2 Z" stroke="#3c3c3c" stroke-width="0.65"/>
<path d="M366.2,274.8 H402.6" stroke-width="0.7"/>
<path d="M533.3,348.6 H499.6 V134.8 H750.6 V348.6 H582.2 V334.4 H736.4 V149.8 H514.6 V334.4 H533.3 Z"/>
<path d="M554.5,134.8 V149.6 M628.6,134.8 V149.6 M554.5,139.5 H628.6 M554.5,144.6 H628.6" stroke-width="0.7"/>
<path d="M535.2,292.9 V338 M537.5,292.9 V338 M535.2,292.9 h2.3 M533.8,338.6 h3.4 v5.6 h-3.4 M582.2,340 h-3.4 v4.4 h3.4" stroke-width="0.6"/>
<path d="M537.5,292.9 A44.5,45.5 0 0 1 580.6,338.6" stroke-width="0.7"/>
<path d="M545.8,149.6 V248.2 H514.6 M536.7,149.6 V178.8 M536.7,218.5 V248.2 M514.6,155.3 H545.8 M514.6,242.6 H545.8" stroke-width="0.7"/>
<rect x="517.4" y="178.8" width="28.4" height="39.7" fill="#fff" stroke-width="0.8" stroke="#3a3a3a"/>
<path d="M517.4,183.2 H545.8 M517.4,214 H545.8" stroke-width="0.6"/>
<path d="M518.4,181 H545.4 M518.4,216.2 H545.4" stroke="#8a8a8a" stroke-width="2.4" stroke-dasharray="1.1,0.9"/>
<path d="M517.8,200 L533,183.6 M517.8,205 L538,183.6 M526,213.8 L545.4,193 M531,213.8 L545.4,198.4" stroke-width="0.6"/>
<path d="M523,221.4 Q527,219.6 531,220.8 Q532.6,221.4 533,224 L535.4,239.6 Q535.4,242 533,243 L528.4,244.6 Q526.4,244.8 525,243.4 L522.4,237.6 Q520.8,229 523,221.4 Z" fill="#fff" stroke-width="1.1"/>
<path d="M529.4,220.6 Q530.6,232 533,243 M523,224.6 L516.4,228.4 Q516,232 517.4,233.4 L516.8,236.6 L518.6,239.6 L522,241.4 L523.6,239.6 M517.4,233.4 L520.4,232.4 M519,229.4 L521.4,230.6" stroke-width="0.9"/>
<g transform="translate(563.7,198.6) rotate(-90)" stroke-width="0.7">
<rect x="-12.2" y="-15.2" width="24.4" height="23.8" rx="2.6" fill="#fff"/>
<rect x="-15.6" y="-11.4" width="4.9" height="18" rx="2.2" fill="#fff"/>
<rect x="10.7" y="-11.4" width="4.9" height="18" rx="2.2" fill="#fff"/>
<rect x="-12.6" y="8.5" width="25.2" height="6.6" rx="2.4" fill="#fff"/>
<path d="M-8.8,-9.9 H8.4 M-8.8,-4.9 H8.4 M-8.8,0 H8.4 M-8.8,5.1 H8.4" stroke-width="0.55" stroke="#555"/>
<path d="M-10.2,-12 V7 M10.2,-12 V7" stroke="#999" stroke-width="0.4"/>
</g>
<g transform="translate(586,276.7)">
<path d="M0,-30.6 L30.6,0 L0,30.6 L-30.6,0 Z" fill="#fff" stroke-width="0.6"/>
<path d="M0,-28.400000000000002 L28.400000000000002,0 L0,28.400000000000002 L-28.400000000000002,0 Z" stroke-width="0.4" stroke="#777"/>
<path d="M-30.6,0 H30.6 M-15.3,-15.3 L15.3,15.3 M15.3,-15.3 L-15.3,15.3 M-15.3,-15.3 H15.3 M-15.3,15.3 H15.3" stroke-width="0.5" stroke="#444"/>
<path d="M-9.2,-22.3 L0,-31.5 L9.2,-22.3" stroke="#0a0a0a" stroke-width="2.4" stroke-linejoin="miter"/>
<path d="M22.3,-9.2 L31.5,0 L22.3,9.2" stroke="#0a0a0a" stroke-width="2.4" stroke-linejoin="miter"/>
<path d="M-9.2,22.3 L0,31.5 L9.2,22.3" stroke="#0a0a0a" stroke-width="2.4" stroke-linejoin="miter"/>
<path d="M-22.3,-9.2 L-31.5,0 L-22.3,9.2" stroke="#0a0a0a" stroke-width="2.4" stroke-linejoin="miter"/>
<path d="M-1.6,-10.3 h5.4 M-16.8,4.6 h5.4 M12.3,4.6 h5.4 M-2,19.3 h5.4" stroke="#555" stroke-width="0.6"/>
</g>
<text x="586" y="260.3" font-size="9.6" fill="#5a5a5a" stroke="none" text-anchor="middle">A</text>
<text x="571.2" y="274.9" font-size="9.6" fill="#5a5a5a" stroke="none" text-anchor="middle">D</text>
<text x="600.4" y="274.9" font-size="9.6" fill="#5a5a5a" stroke="none" text-anchor="middle">B</text>
<text x="585.6" y="288.5" font-size="9.6" fill="#5a5a5a" stroke="none" text-anchor="middle">C</text>
<g transform="translate(645.1,211.4) rotate(15.5)" stroke-width="0.7">
<g transform="scale(1,1)">
<path d="M-15.2,-13 V-38.6 Q-15.2,-43.4 -10.4,-43.4 H10.4 Q15.2,-43.4 15.2,-38.6 V-11" fill="#fff"/>
<path d="M-10.8,-14.6 V-33.8 Q-10.8,-37.4 -7.2,-37.4 H7.2 Q10.8,-37.4 10.8,-33.8 V-14"/>
<path d="M-10.6,-35 Q-10,-30.4 -5.4,-30.4 H5.4 Q10,-30.4 10.6,-35" stroke-width="0.6"/>
</g>
<g transform="scale(1,-1)">
<path d="M-15.2,-13 V-38.6 Q-15.2,-43.4 -10.4,-43.4 H10.4 Q15.2,-43.4 15.2,-38.6 V-11" fill="#fff"/>
<path d="M-10.8,-14.6 V-33.8 Q-10.8,-37.4 -7.2,-37.4 H7.2 Q10.8,-37.4 10.8,-33.8 V-14"/>
<path d="M-10.6,-35 Q-10,-30.4 -5.4,-30.4 H5.4 Q10,-30.4 10.6,-35" stroke-width="0.6"/>
</g>
<circle cx="0" cy="0" r="15" fill="#fff"/>
</g>
<path d="M674,149.6 V271.6 M676.6,149.6 V271.6 M674,271.6 H735.8" stroke-width="0.7"/>
<path d="M686.2,161 Q705,159.6 724,160.6 Q722.8,169 724.4,178.2 Q705,176.6 686.4,178.4 Q687.6,169 686.2,161 Z" fill="#fff" stroke="#4a4a4a" stroke-width="0.7"/>
<path d="M676.6,179.6 H710.6 M676.6,196 H712.4" stroke-width="0.8"/>
<path d="M710.6,179.6 Q713.6,188 713.2,198.8 L718.4,197.6 L722,200.4 L728,199.6 L735.6,202.2 M710.6,179.6 Q724,188 735.6,202" stroke-width="0.7"/>
<path d="M688.25,196 V250.4 M686.4,249 H735.2" stroke="#7c7c7c" stroke-width="3.2" stroke-dasharray="1,0.35"/>
<path d="M686.5,196 V271.6 M690,196 V271.6 M676.6,247.4 H735.2 M676.6,250.6 H735.2" stroke="#555" stroke-width="0.6"/>
<g stroke-width="0.9" stroke="#222" stroke-linejoin="round">
<path d="M701.8,233.4 Q712,238.8 724.4,236 Q732,233 735.2,222" stroke-width="0.6" stroke="#333"/>
<path d="M703.6,227.6 Q701.4,232.6 704.6,235.6 L712,236.6 L723.4,232.6 Q727.8,230.4 726.8,227.2 Q724.4,225.2 720.4,227.4 L717,226.4 L707.6,225.6 Z" fill="#fff"/>
<path d="M707.6,231 Q711.8,229.4 716.4,231.2 L716.2,236.8 Q711.8,239.2 707.8,237 Z" fill="#3a3a3a"/>
<path d="M717.8,230.2 Q720.8,228.6 723.6,230 L723.2,234.8 Q720.6,236.2 718.2,235 Z" fill="#3a3a3a"/>
<path d="M702.8,219.4 Q703,212.2 710.6,212.2 Q718.8,212.6 719.2,220.4 Q719,225.8 712.6,226.4 Q705.4,226.6 702.8,219.4 Z" fill="#fff" stroke-width="1.1"/>
<path d="M704.8,216.8 Q710,213.4 717,216 M705.8,217.8 L709.2,221.2 M711,213 L710.4,216" stroke-width="0.7"/>
<path d="M707.6,221.2 Q712.6,217.8 718.4,220 L718,225 Q712.6,227.4 708,225.2 Z" fill="#3c3c3c"/>
<rect x="713.7" y="227" width="3.8" height="2.3" fill="#1c1c1c" stroke="none"/>
</g>
<path d="M735.8,272 H673.4 Q668.4,272 668.4,277 V329.4 Q668.4,334.4 673.4,334.4" stroke-width="0.7"/>
<path d="M674.3,272.4 L685.6,334.2 M682,272.4 L702.7,334.2 M686.6,272.4 L722.4,334.2 M692,272.4 L735.6,319.8" stroke-width="0.6"/>
</g>
<g fill="none" stroke="#3fd43f" stroke-width="0.7" stroke-linejoin="round" opacity="0.85"><path d="M627.9,321.6 L632.0,323.9 Q633.4,326.0 630.9,325.6 Q632.9,329.0 630.5,328.2 Q630.8,330.8 628.6,329.5 Q627.8,330.7 626.0,328.9 L624.5,324.5 M624.5,324.5 L624.5,329.2 Q623.5,331.4 622.5,329.1 Q620.7,332.5 620.1,330.1 Q618.0,331.6 618.0,329.0 Q616.6,328.9 617.2,326.5 L620.3,323.0 M620.3,323.0 L616.2,325.3 Q613.8,325.6 615.3,323.6 Q611.4,323.7 613.3,321.9 Q610.9,320.9 613.1,319.6 Q612.5,318.3 614.9,317.7 L619.5,318.6 M619.5,318.6 L615.4,316.3 Q614.0,314.2 616.5,314.6 Q614.5,311.2 616.9,312.0 Q616.6,309.4 618.8,310.7 Q619.6,309.5 621.4,311.3 L622.9,315.7 M622.9,315.7 L622.9,311.0 Q623.9,308.8 624.9,311.1 Q626.7,307.7 627.3,310.1 Q629.4,308.6 629.4,311.2 Q630.8,311.3 630.2,313.7 L627.1,317.2 M627.1,317.2 L631.2,314.9 Q633.6,314.6 632.1,316.6 Q636.0,316.5 634.1,318.3 Q636.5,319.3 634.3,320.6 Q634.9,321.9 632.5,322.5 L627.9,321.6 "/><path d="M621.9000000000001,317.70000000000005 L626.5,320.5 L622.3000000000001,322.90000000000003 Z"/></g>
<defs><linearGradient id="bg1" x1="0" y1="0" x2="0" y2="1"><stop offset="0" stop-color="#1a4075"/><stop offset="0.55" stop-color="#1f4a82"/><stop offset="1" stop-color="#4f7fb6"/></linearGradient><linearGradient id="yg1" x1="0" y1="1" x2="1" y2="0"><stop offset="0" stop-color="#fdf6cc"/><stop offset="0.6" stop-color="#f7d93a"/><stop offset="1" stop-color="#f2c71c"/></linearGradient></defs>
<g><path d="M35.3,310.5 H59.9 L71.5,322.1 V357.6 H35.3 Z" fill="url(#yg1)"/>
<path d="M35.3,310.5 H59.9 L71.5,322.1 V344.8 Q52,338.6 35.3,336.2 Z" fill="url(#bg1)"/>
<path d="M59.9,310.5 L71.5,322.1 Q65,320.4 61.6,321.2 Q62.6,316 59.9,310.5 Z" fill="#0e2a52"/>
<path d="M45.6,310.5 V335.8 M35.3,326.3 H71.5" stroke="#d3e1ef" stroke-width="1.1" fill="none"/><rect x="41.8" y="322.5" width="7.6" height="7.6" fill="#1d467d" stroke="#d3e1ef" stroke-width="1.1"/><circle cx="45.6" cy="326.3" r="0.7" fill="#d3e1ef"/>
<text x="44.8" y="354.9" font-size="12" fill="#141414" textLength="25.3" lengthAdjust="spacingAndGlyphs" font-weight="bold" >.dwg</text>
</g>
<defs><linearGradient id="rg" x1="0" y1="0" x2="0" y2="1"><stop offset="0" stop-color="#e8323a"/><stop offset="0.55" stop-color="#d21f28"/><stop offset="1" stop-color="#b0141c"/></linearGradient><radialGradient id="cg" cx="0.5" cy="0.45" r="0.6"><stop offset="0" stop-color="#b01218"/><stop offset="1" stop-color="#7e0a10"/></radialGradient></defs>
<rect x="5" y="366.4" width="94.5" height="34" rx="17" fill="url(#rg)"/>
<ellipse cx="52" cy="401.4" rx="42" ry="1.6" fill="#000" opacity="0.12"/>
<circle cx="82" cy="383.3" r="10" fill="url(#cg)"/>
<path d="M79.2,376.6 h5.6 v6 h3.6 l-6.4,7 l-6.4,-7 h3.6 z" fill="#ffffff"/>
<text x="12.2" y="389.4" font-size="14" fill="#ffffff" textLength="56" lengthAdjust="spacingAndGlyphs" font-weight="bold" >DOWNLOAD</text>
<g stroke="#3a2612" stroke-width="0.5" stroke-linejoin="round">
<path d="M752.6,95.8 Q757,96.4 759.6,99.4 Q763.8,99.8 765.4,103 Q765.2,107 763.8,110 Q763.6,113.8 761.8,115.8 Q760,112 759,108.6 Q757,106 755.2,104.8 Q756.4,100 752.6,95.8 Z" fill="#f2b632"/>
<path d="M757.6,99.6 Q760.6,104 761.6,111" stroke="#d8901a" stroke-width="0.5" fill="none"/>
<path d="M722,130 L713.2,138 L711.2,143.4 L716.8,145.6 L719.6,140.8 L728,135.4 Z" fill="#2b7fd4" stroke="#0f3a7a"/>
<path d="M727,131 L735.2,137.2 L736.6,143.6 L741.2,142.4 L739.8,134.8 L733.8,127.6 Z" fill="#2b7fd4" stroke="#0f3a7a"/>
<path d="M711.2,142.6 L716.8,145 L715.6,148.8 Q711,150.4 707,148.6 Q707.8,145.4 711.2,142.6 Z" fill="#1f5fb4" stroke="#0c2c60"/><path d="M711.4,142.4 l5.6,2.4 l0.7,-1.8 l-5.4,-2.4 z" fill="#222" stroke="none"/>
<path d="M736.6,142.8 L741.2,141.6 L743,146.2 Q742.6,149 739.2,149.4 Q737.4,146.2 736.6,142.8 Z" fill="#1f5fb4" stroke="#0c2c60"/><path d="M736.2,141.8 l5,-1.2 l0.5,1.8 l-5,1.2 z" fill="#222" stroke="none"/>
<path d="M720.2,113.6 Q727,111.6 734.6,114 L735.8,129 Q730,134.8 721.2,132.8 Q719.4,124 720.2,113.6 Z" fill="#2b7fd4" stroke="#0f3a7a"/>
<path d="M727.6,113.6 Q726.6,124 728,133.4" stroke="#174a94" stroke-width="0.6" fill="none"/><path d="M721,127.6 Q728,130 735.6,127" stroke="#174a94" stroke-width="0.6" fill="none"/>
<path d="M721.2,114.2 Q714,116.8 709.2,122 L711.2,126 Q717,122.4 722.6,120.4 Z" fill="#2b7fd4" stroke="#0f3a7a"/>
<path d="M733.4,114 Q738,112.8 740.4,109.8 L743.8,112 Q741.2,118 735,120.4 Z" fill="#2b7fd4" stroke="#0f3a7a"/>
<path d="M694.6,128.9 L756.6,104.6" stroke="#6e3512" stroke-width="2.3" stroke-linecap="round"/><path d="M694.8,128.7 L756.4,104.5" stroke="#b8682e" stroke-width="1.1" stroke-linecap="round"/>
<circle cx="709.6" cy="124" r="2.1" fill="#f0b48a"/><circle cx="742.2" cy="110.6" r="2.1" fill="#f0b48a"/>
<ellipse cx="742.2" cy="102" rx="1.9" ry="2.7" fill="#e8a274"/>
<path d="M712.4,95.6 Q711.4,104 715.4,109.8 Q721,114.8 727.4,114.6 Q734,113.8 738.8,108.8 Q742.2,103 741.8,95.6 Z" fill="#f0b48a"/>
<g stroke="none"><ellipse cx="719.4" cy="100.4" rx="2.7" ry="2" fill="#fff"/><ellipse cx="731" cy="100.8" rx="2.7" ry="2" fill="#fff"/><circle cx="720" cy="100.6" r="1.4" fill="#4f7f9e"/><circle cx="730.6" cy="101" r="1.4" fill="#4f7f9e"/><circle cx="720" cy="100.6" r="0.6" fill="#111"/><circle cx="730.6" cy="101" r="0.6" fill="#111"/></g>
<path d="M716.2,98.4 Q719.4,97 722.8,98.8 M727.4,99 Q731,97.4 734.6,98.8" stroke="#4a2a12" stroke-width="0.9" fill="none"/>
<path d="M720.6,105.8 Q726,109.8 731.8,105.4" stroke="#6e3214" stroke-width="0.8" fill="none"/><path d="M724.6,103.4 q1,0.8 2,0" stroke="#b8744a" stroke-width="0.5" fill="none"/>
<path d="M713.2,91 Q712.6,86 714.6,83.4 L716.8,79.6 L719.6,80.6 L723.4,76.8 L726.2,78.4 L732.8,75.4 L733.8,78 L739.6,77.8 L739,81 Q742.4,84.6 742.3,91.4 Z" fill="#f6b414"/>
<path d="M717.4,90 Q717.8,85 721.4,82.4 M723,90 Q724,83.6 728.8,80 M729.4,90 Q731,84.6 735.8,82 M735.4,90.4 Q736.8,86.6 739.4,85" stroke="#d07e0c" stroke-width="0.7" fill="none"/>
<path d="M719.4,88 Q720.4,84 723.4,81.6 M725.8,88 Q727.4,83 731.4,80.4" stroke="#fde06a" stroke-width="0.9" fill="none"/>
<path d="M711.6,90.4 Q727,88 742.4,90.4 L742.2,97.8 Q727,95.6 712,97.6 Z" fill="#2b2b33" stroke="#15151a"/>
<path d="M742,91.2 Q746,89.4 748.8,90.8 Q750.8,93 749.8,96 Q750.8,99 749.4,101.8 Q747.6,98.8 746.6,96.2 Q744.6,96.8 742,96.2 Z" fill="#2b2b33" stroke="#15151a"/>
</g>
<g fill="#2288dd" stroke="#2288dd" stroke-width="0.6" stroke-linejoin="round">
<text x="676.4" y="161.4" font-size="18.6" textLength="12.8" lengthAdjust="spacingAndGlyphs" transform="rotate(-4 676 161)">P</text>
<text x="686.2" y="167.6" font-size="11.6">i</text>
<text x="690.3" y="167.8" font-size="12.4">s</text>
<text x="697.4" y="168" font-size="18.6">l</text>
<text x="702.6" y="168.4" font-size="12.4">i</text>
<text x="708.4" y="168.4" font-size="18.4" textLength="10.8" lengthAdjust="spacingAndGlyphs">k</text>
<text x="724.4" y="168.8" font-size="19" textLength="13.6" lengthAdjust="spacingAndGlyphs">M</text>
<text x="739.4" y="168" font-size="9">i</text>
<text x="743" y="167.6" font-size="12.4" textLength="13" lengthAdjust="spacingAndGlyphs">m</text>
<text x="757" y="166.2" font-size="13.4" textLength="9.4" lengthAdjust="spacingAndGlyphs">a</text>
<text x="767" y="162.8" font-size="19" textLength="10.4" lengthAdjust="spacingAndGlyphs" transform="rotate(-10 767 162.8)">r</text>
</g>
<rect x="0" y="409.3" width="780" height="13" fill="#212731"/>
<rect x="0" y="422.2" width="780" height="16.8" fill="#1b1f27"/>
<path d="M6.2,413.9 h6.9 M6.2,416.1 h6.9 M6.2,418.3 h6.9" stroke="#cfd4dc" stroke-width="0.9"/>
<path d="M41.8,422.2 L45.2,410 L89.2,410 L85.8,422.2 Z" fill="#3b4453"/>
<path d="M18,421.4 l2.8,-10 M104.6,421.4 l2.8,-10" stroke="#3a4250" stroke-width="0.6"/>
<text x="23.8" y="418" font-size="5.2" fill="#cfd4dc" textLength="13.1" lengthAdjust="spacingAndGlyphs" >Model</text>
<text x="46.9" y="418" font-size="5.2" fill="#ffffff" textLength="36.9" lengthAdjust="spacingAndGlyphs" font-weight="bold" >PislikMimar.com</text>
<path d="M93.7,416.2 h6.4 M96.9,413 v6.4" stroke="#e8ebf0" stroke-width="0.9"/>
<rect x="581.5" y="411.5" width="198.5" height="9.3" fill="#343c4a"/>
<text x="583.1" y="418" font-size="4.8" fill="#e8ebf0" textLength="13.1" lengthAdjust="spacingAndGlyphs" font-weight="bold" >PAPER</text>
<rect x="598" y="411.5" width="0.5" height="9.3" fill="#212731"/>
<path d="M601,412.6 v6.6 h5.4 M601,417.4 h1.6 v1.8" stroke="#c5cbd5" stroke-width="0.6" fill="none"/>
<circle cx="613" cy="416.2" r="2.6" fill="none" stroke="#c5cbd5" stroke-width="0.6"/><path d="M613,416.2 h3.2 M613,416.2 l2.2,-2.2" stroke="#c5cbd5" stroke-width="0.5"/>
<path d="M620.6,416.15000000000003 L622.4,416.15000000000003 L621.5,417.23 Z" fill="#c5cbd5"/>
<path d="M629,412.8 l2.2,6.8 M631.6,412.8 l-2.8,4.4" stroke="#c5cbd5" stroke-width="0.6"/>
<path d="M636.8000000000001,416.15000000000003 L638.6,416.15000000000003 L637.7,417.23 Z" fill="#c5cbd5"/>
<rect x="642" y="411.5" width="9.2" height="9.3" fill="#4a80bc"/><rect x="651.6" y="411.5" width="9.2" height="9.3" fill="#4a80bc"/>
<path d="M644,419 h5.6 M644,419 l5,-5.6" stroke="#eef2f8" stroke-width="0.7"/>
<rect x="653.6" y="413.6" width="5" height="5" fill="none" stroke="#eef2f8" stroke-width="0.7"/><rect x="652.8" y="412.8" width="1.6" height="1.6" fill="#eef2f8"/>
<path d="M663.1,416.15000000000003 L664.9,416.15000000000003 L664,417.23 Z" fill="#c5cbd5"/>
<rect x="670.8" y="413.4" width="5.4" height="5.4" fill="none" stroke="#c5cbd5" stroke-width="0.6" stroke-dasharray="1.2,0.8"/><path d="M671.6,414.2 l3.8,3.8 M675.4,414.2 l-3.8,3.8" stroke="#c5cbd5" stroke-width="0.4"/>
<path d="M681.0,419.6 l2.4,-6.6 l2.4,6.6 M682.0,417.4 h2.8 M684.4,413 l1.8,-0.8" stroke="#e8ebf0" stroke-width="0.8" fill="none"/>
<path d="M690.2,419.6 l2.4,-6.6 l2.4,6.6 M691.2,417.4 h2.8 M693.6,413 l1.8,-0.8" stroke="#e8ebf0" stroke-width="0.8" fill="none"/>
<circle cx="704.3" cy="416.2" r="2" fill="none" stroke="#e8ebf0" stroke-width="1.5"/><circle cx="704.3" cy="416.2" r="3.2" fill="none" stroke="#e8ebf0" stroke-width="0.9" stroke-dasharray="1.1,1.4"/>
<path d="M711.7,416.15000000000003 L713.5,416.15000000000003 L712.6,417.23 Z" fill="#c5cbd5"/>
<path d="M717.4,416.2 h6.8 M720.8,412.8 v6.8" stroke="#e8ebf0" stroke-width="0.9"/>
<rect x="728.4" y="413" width="3" height="3" fill="none" stroke="#c5cbd5" stroke-width="0.5"/><circle cx="733" cy="415" r="1.2" fill="none" stroke="#c5cbd5" stroke-width="0.5"/><path d="M729,419.6 h3.6 M730.8,416 v3.6" stroke="#c5cbd5" stroke-width="0.5"/>
<rect x="738.6" y="413" width="2.6" height="2.6" fill="#e8c33a"/><rect x="741.4" y="415" width="2.6" height="2.6" fill="#58a0dc"/><rect x="739" y="417" width="2.6" height="2.4" fill="#4ab86a"/><path d="M741.2,413 v6.6" stroke="#d8dce3" stroke-width="0.4"/>
<rect x="748.4" y="412.8" width="6.4" height="4.8" fill="#d8dce3"/><rect x="749.2" y="413.6" width="4.8" height="2.4" fill="#8a6fc0"/><rect x="751" y="417.6" width="3" height="2.2" fill="#e8a23a"/>
<rect x="760" y="413.4" width="6.8" height="5.4" fill="none" stroke="#e8ebf0" stroke-width="0.8"/><path d="M763.4,416 l2.6,-1.8 v1.8 z" fill="#e8ebf0"/>
<path d="M770.8,413.8 h6.8 M770.8,416.2 h6.8 M770.8,418.6 h6.8" stroke="#e8ebf0" stroke-width="0.9"/>
<g fill="#f4f6f9"><path d="M6.5,428.7 l2.8,-0.4 v2.7 h-2.8 z M9.8,428.2 l3.3,-0.5 v3.3 h-3.3 z M6.5,431.5 h2.8 v2.7 l-2.8,-0.4 z M9.8,431.5 h3.3 v3.3 l-3.3,-0.5 z"/></g>
<rect x="19.2" y="423.2" width="117" height="15.8" fill="#f3f3f3"/>
<circle cx="28.6" cy="429.4" r="2" fill="none" stroke="#333" stroke-width="0.7"/><path d="M27.2,431 l-2.4,2.4" stroke="#333" stroke-width="0.8"/>
<text x="36.2" y="433.2" font-size="7.2" fill="#3a3a3a" textLength="8.8" lengthAdjust="spacingAndGlyphs" >Ara</text>
<path d="M116.9,425.6 Q117.6,429.6 121.6,430.4 Q117.6,431.2 116.9,435.2 Q116.2,431.2 112.2,430.4 Q116.2,429.6 116.9,425.6 Z" fill="#f5c12e"/>
<path d="M126.2,430.2 Q126.5,432.2 128.4,432.5 Q126.5,432.8 126.2,434.8 Q125.9,432.8 124,432.5 Q125.9,432.2 126.2,430.2 Z" fill="#f5c12e"/>
<path d="M109.2,432 l0.5,1.1 l1.1,0.4 l-1.1,0.4 l-0.5,1.1 l-0.5,-1.1 l-1.1,-0.4 l1.1,-0.4 z" fill="#2fa5e0"/><circle cx="123.5" cy="426.4" r="0.6" fill="#e0584a"/><circle cx="131.2" cy="434.2" r="0.5" fill="#e8a23a"/><circle cx="121" cy="424.8" r="0.4" fill="#e8a23a"/>
<circle cx="147.4" cy="430.7" r="5" fill="#e8453c"/><path d="M147.4,430.7 L143.07,428.2 A5,5 0 0 0 147.4,435.7 L149.9,431.6 Z" fill="#34a853"/><path d="M147.4,430.7 L151.73,428.2 A5,5 0 0 1 147.4,435.7 L149.6,431.9 Z" fill="#fbbc05"/><path d="M143.07,428.2 A5,5 0 0 1 151.73,428.2 Z" fill="#e8453c"/><circle cx="147.4" cy="430.7" r="2.3" fill="#fff"/><circle cx="147.4" cy="430.7" r="1.8" fill="#4285f4"/>
<rect x="158.2" y="422.8" width="18.4" height="16.2" fill="#41464f"/>
<rect x="163" y="425.8" width="8.5" height="10" rx="0.8" fill="#d0144b"/><rect x="163" y="425.8" width="2.2" height="10" rx="0.6" fill="#a80f3c"/><rect x="166" y="433.6" width="4" height="1.2" fill="#f08aa6"/>
<text x="167.8" y="432.8" font-size="6.4" fill="#ffffff" text-anchor="middle" font-weight="bold" >A</text>
<circle cx="186.4" cy="431.2" r="4.6" fill="#e4e8ee"/><ellipse cx="186.4" cy="431.2" rx="5.6" ry="2.4" fill="none" stroke="#8fa3b8" stroke-width="0.8" transform="rotate(-25 186.4 431.2)"/><circle cx="185.6" cy="431.6" r="1.8" fill="#6f8296"/><circle cx="190.4" cy="426.4" r="1" fill="#f08a3a"/>
<rect x="139.2" y="438.2" width="16.2" height="0.8" fill="#76b9ed"/><rect x="158.2" y="438.2" width="18.4" height="0.8" fill="#76b9ed"/><rect x="179.2" y="438.2" width="16.8" height="0.8" fill="#76b9ed"/>
<path d="M714.8,431.6 l2.2,-2.2 l2.2,2.2" stroke="#e8ebf0" stroke-width="0.7" fill="none"/>
<path d="M723.6,429.6 h1.4 l1.8,-1.6 v5.2 l-1.8,-1.6 h-1.4 z" fill="#e8ebf0"/><path d="M728,429 v3.2 M729.2,428.4 v4.4" stroke="#e8ebf0" stroke-width="0.5"/>
<text x="739.7" y="429" font-size="4.6" fill="#f0f2f5" textLength="10.3" lengthAdjust="spacingAndGlyphs" >23:47</text>
<text x="734.6" y="435.7" font-size="4.6" fill="#f0f2f5" textLength="21.1" lengthAdjust="spacingAndGlyphs" >14.04.2026</text>
<path d="M762.6,427.6 h6.8 v5 h-3 l-1.4,1.6 v-1.6 h-2.4 z" fill="none" stroke="#e8ebf0" stroke-width="0.7"/>
</svg>
</body></html>
